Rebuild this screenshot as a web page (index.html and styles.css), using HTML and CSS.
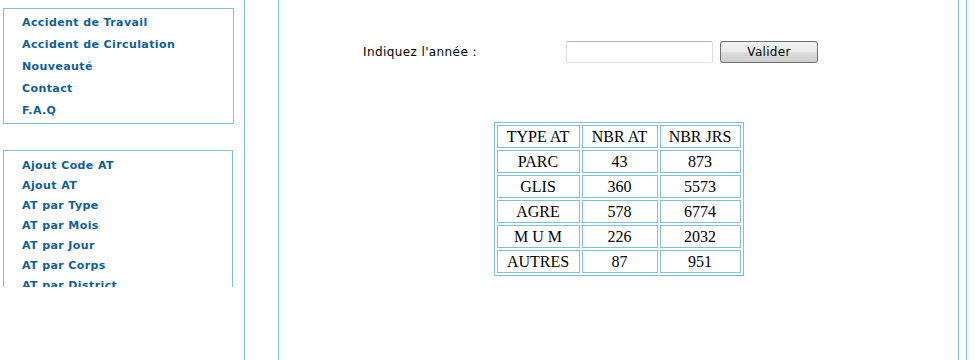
FILE: index.html
```html
<!DOCTYPE html>
<html lang="fr">
<head>
    <meta charset="UTF-8">
    <title>Statistiques AT</title>
    <link rel="stylesheet" href="styles.css">
</head>
<body>
    <div class="page">
        <div class="sidebar">
            <ul class="menu menu-main">
                <li><a href="#">Accident de Travail</a></li>
                <li><a href="#">Accident de Circulation</a></li>
                <li><a href="#">Nouveauté</a></li>
                <li><a href="#">Contact</a></li>
                <li><a href="#">F.A.Q</a></li>
            </ul>
            <div class="menu-clip">
                <ul class="menu menu-admin">
                    <li><a href="#">Ajout Code AT</a></li>
                    <li><a href="#">Ajout AT</a></li>
                    <li><a href="#">AT par Type</a></li>
                    <li><a href="#">AT par Mois</a></li>
                    <li><a href="#">AT par Jour</a></li>
                    <li><a href="#">AT par Corps</a></li>
                    <li><a href="#">AT par District</a></li>
                </ul>
            </div>
        </div>

        <div class="main">
            <form class="year-form">
                <label for="annee">Indiquez l'année :</label>
                <input type="text" id="annee" name="annee">
                <button type="submit">Valider</button>
            </form>

            <table class="stats" cellspacing="2">
                <tr><td>TYPE AT</td><td>NBR AT</td><td>NBR JRS</td></tr>
                <tr><td>PARC</td><td>43</td><td>873</td></tr>
                <tr><td>GLIS</td><td>360</td><td>5573</td></tr>
                <tr><td>AGRE</td><td>578</td><td>6774</td></tr>
                <tr><td>M U M</td><td>226</td><td>2032</td></tr>
                <tr><td>AUTRES</td><td>87</td><td>951</td></tr>
            </table>
        </div>

        <div class="aside"></div>
    </div>
</body>
</html>
```

FILE: styles.css
```css
body {
    margin: 0;
    background: #fff;
    font-family: "DejaVu Sans", Verdana, sans-serif;
}
.page {
    display: flex;
    min-height: 100vh;
}
.sidebar {
    width: 244px;
    flex-shrink: 0;
    border-right: 1px solid #7fc0de;
}
.menu {
    list-style: none;
    margin: 0;
    padding: 0 0 0 18px;
    border: 1px solid #7fc0de;
    font-size: 11px;
}
.menu a {
    color: #0f5f9c;
    font-weight: bold;
    letter-spacing: 0.4px;
    text-decoration: none;
}
.menu-main {
    width: 211px;
    margin: 8px 0 0 3px;
    padding-top: 3px;
    padding-bottom: 1px;
}
.menu-main li {
    line-height: 22px;
}
.menu-clip {
    width: 230px;
    height: 137px;
    margin: 26px 0 0 3px;
    overflow: hidden;
}
.menu-admin {
    padding-top: 5px;
}
.menu-admin li {
    line-height: 20px;
}
.main {
    width: 679px;
    flex-shrink: 0;
    margin-left: 33px;
    border-left: 1px solid #7fc0de;
    border-right: 1px solid #7fc0de;
}
.aside {
    flex: 1;
    margin-left: 7px;
    border-left: 1px solid #7fc0de;
}
.year-form {
    display: flex;
    align-items: center;
    margin: 41px 0 0 84px;
}
.year-form label {
    width: 203px;
    font-family: "DejaVu Sans", Tahoma, sans-serif;
    font-size: 12px;
    letter-spacing: 0.4px;
    color: #000;
}
.year-form input {
    box-sizing: border-box;
    width: 147px;
    height: 22px;
    margin: 0;
    border: 1px solid #dcdfe6;
    border-top-color: #adb0b8;
    border-radius: 2px;
}
.year-form button {
    box-sizing: border-box;
    width: 98px;
    height: 22px;
    margin-left: 7px;
    padding: 0;
    border: 1px solid #707070;
    border-radius: 3px;
    background: linear-gradient(#f2f2f2 0%, #ebebeb 50%, #dddddd 51%, #cfcfcf 100%);
    font-family: "DejaVu Sans", Tahoma, sans-serif;
    font-size: 12px;
    letter-spacing: 0.3px;
    color: #000;
}
.stats {
    margin: 59px auto 0;
    border: 1px solid #7fc0de;
    font-family: "Liberation Serif", "Times New Roman", serif;
    font-size: 16px;
    color: #000;
}
.stats td {
    height: 21px;
    padding: 0;
    border: 1px solid #7fc0de;
    text-align: center;
}
.stats td:nth-child(1) { width: 81px; }
.stats td:nth-child(2) { width: 74px; }
.stats td:nth-child(3) { width: 79px; }
```
